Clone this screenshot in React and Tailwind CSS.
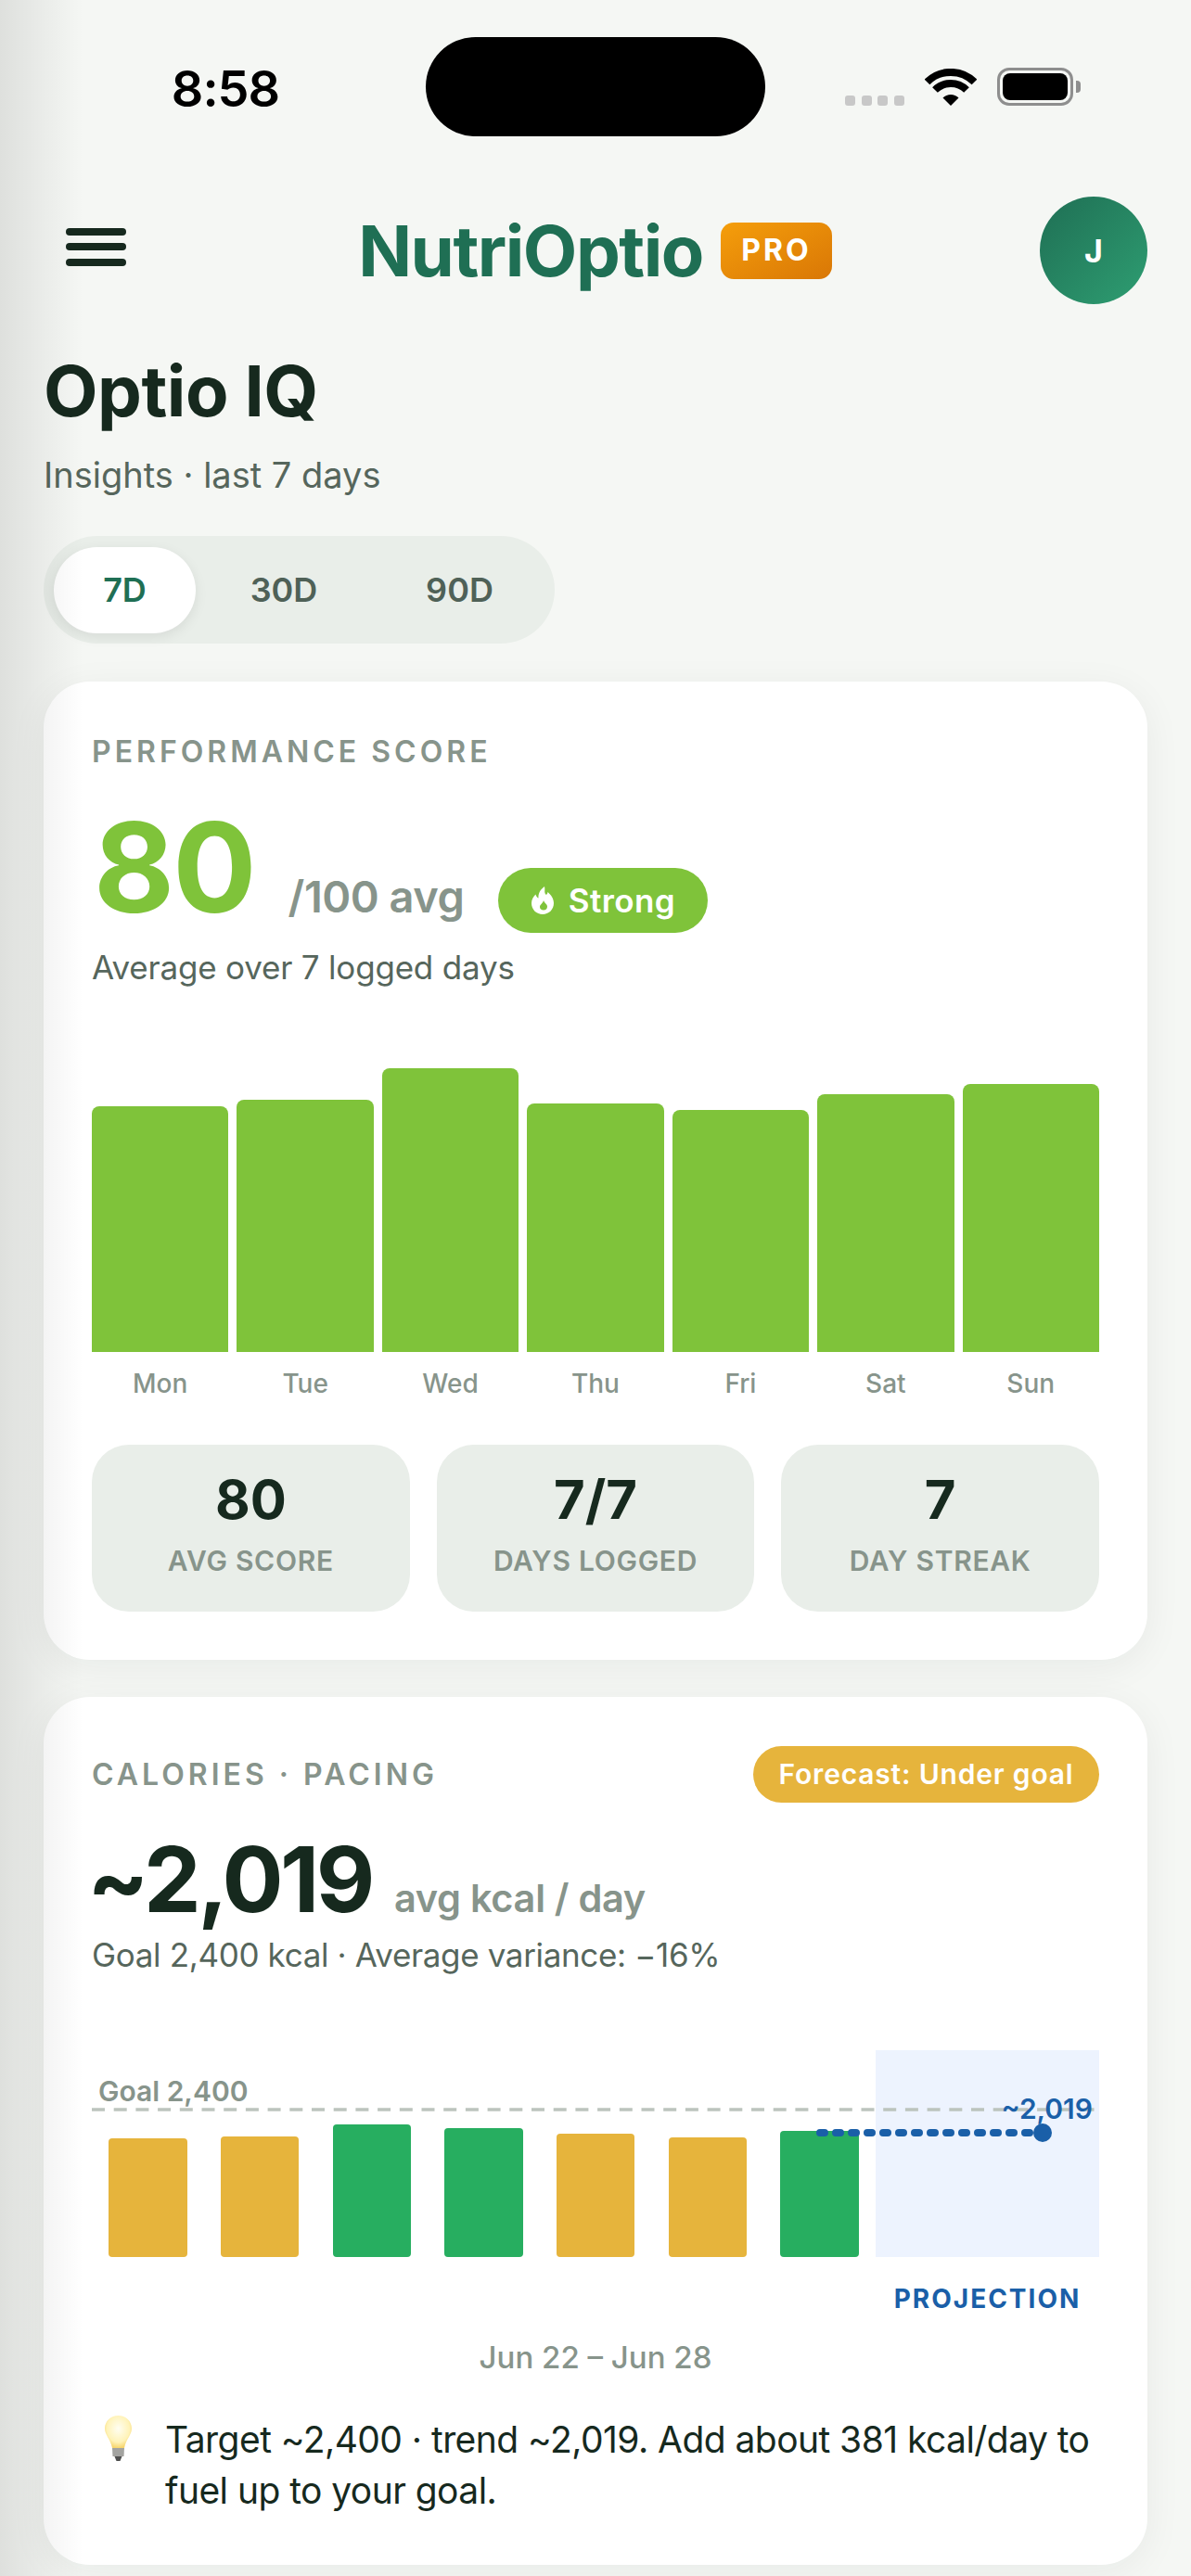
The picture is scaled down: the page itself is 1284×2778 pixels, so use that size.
import React from "react";

const scoreBars = [
  { day: "Mon", height: 265 },
  { day: "Tue", height: 272 },
  { day: "Wed", height: 306 },
  { day: "Thu", height: 268 },
  { day: "Fri", height: 261 },
  { day: "Sat", height: 278 },
  { day: "Sun", height: 289 },
];

const stats = [
  { value: "80", label: "AVG SCORE" },
  { value: "7/7", label: "DAYS LOGGED" },
  { value: "7", label: "DAY STREAK" },
];

const calorieBars = [
  { height: 128, color: "bg-[#e6b43c]" },
  { height: 130, color: "bg-[#e6b43c]" },
  { height: 143, color: "bg-[#27ae60]" },
  { height: 139, color: "bg-[#27ae60]" },
  { height: 133, color: "bg-[#e6b43c]" },
  { height: 129, color: "bg-[#e6b43c]" },
  { height: 136, color: "bg-[#27ae60]" },
];

const StatusBar = () => (
  <div className="flex h-[107px] mt-[40px]">
    <div className="w-[459px] pl-[27px] pt-[29px] text-center text-[54px] leading-[54px] font-semibold text-black tracking-[-1px]">
      8:58
    </div>
    <div className="w-[366px] h-[107px] rounded-[54px] bg-black" />
    <div className="flex items-end pl-[86px] pt-[33px] h-[74px]">
      <div className="flex gap-[6.5px]">
        {[0, 1, 2, 3].map((i) => (
          <span key={i} className="w-[11px] h-[11px] rounded-[3px] bg-[#c8c8c8]" />
        ))}
      </div>
      <svg className="ml-[22px] w-[56px] h-[40px]" viewBox="0 0 56 40">
        <path d="M2.5 14.5A36 36 0 0 1 53.5 14.5" fill="none" stroke="#000" strokeWidth="8" />
        <path d="M11 23A24 24 0 0 1 45 23" fill="none" stroke="#000" strokeWidth="8" />
        <path d="M28 40L19.5 31.5A12 12 0 0 1 36.5 31.5Z" fill="#000" />
      </svg>
      <div className="ml-[22px] flex items-center">
        <div className="w-[82px] h-[41px] rounded-[13px] border-[3px] border-[#8e8e8e] p-[3px]">
          <div className="w-full h-full rounded-[8px] bg-black" />
        </div>
        <div className="ml-[3px] w-[5px] h-[13px] rounded-r-[4px] bg-[#8e8e8e]" />
      </div>
    </div>
  </div>
);

const Header = () => (
  <div className="grid grid-cols-[116px_1fr_116px] items-center mt-[65px] px-[47px]">
    <div className="ml-[24px] mb-[8px] w-[65px] flex flex-col gap-[8.5px]">
      <span className="h-[8px] rounded-full bg-[#16291e]" />
      <span className="h-[8px] rounded-full bg-[#16291e]" />
      <span className="h-[8px] rounded-full bg-[#16291e]" />
    </div>
    <div className="flex items-center justify-center gap-[19px] pr-[1px]">
      <span className="text-[76px] leading-[84px] font-bold text-[#1f6f54] tracking-[-1.5px]">NutriOptio</span>
      <span className="w-[120px] h-[61px] rounded-[14px] bg-gradient-to-br from-[#f59e0b] to-[#d97706] flex items-center justify-center text-[32px] font-bold text-white tracking-[3px]">
        PRO
      </span>
    </div>
    <div className="w-[116px] h-[116px] rounded-full bg-gradient-to-br from-[#1f6f54] to-[#2e9e72] flex items-center justify-center text-[34px] font-bold text-white">
      J
    </div>
  </div>
);

const RangeTabs = () => (
  <div className="mt-[41px] w-[551px] h-[116px] rounded-[58px] bg-[#e9eee9] flex items-center pl-[11px] text-[36px] font-semibold text-[#4f6157]">
    <div className="w-[153px] h-[93px] rounded-[47px] bg-white shadow-[0_4px_14px_rgba(0,0,0,0.08)] flex items-center justify-center text-[#1f6f54]">
      7D
    </div>
    <div className="w-[190px] text-center">30D</div>
    <div className="w-[189px] text-center">90D</div>
  </div>
);

const PerformanceCard = () => (
  <div className="mt-[41px] h-[1055px] rounded-[50px] bg-white shadow-[0_8px_40px_rgba(20,40,30,0.06)] px-[52px] pt-[56px]">
    <div className="text-[32px] leading-[40px] font-semibold tracking-[4px] text-[#87948b]">PERFORMANCE SCORE</div>
    <div className="flex items-baseline mt-[34px] h-[140px]">
      <span className="text-[134px] leading-[140px] font-bold text-[#7fc33a] tracking-[-2px] ml-[2px]">80</span>
      <span className="ml-[36px] text-[47px] font-semibold text-[#87948b] tracking-[-0.5px]">/100 avg</span>
      <span className="ml-[37px] translate-y-[2px] w-[226px] h-[70px] rounded-[35px] bg-[#7fc33a] flex items-center justify-center gap-[16px] text-[35px] font-semibold text-white tracking-[0.4px]">
        <svg className="w-[24px] h-[30px]" viewBox="0 0 24 30">
          <path
            fillRule="evenodd"
            fill="#fff"
            d="M14 0C15 4 13 7 16 9C17 8 17.500 7 17.500 6C21 9 24 13 24 18C24 25 18.500 30 12 30C5.500 30 0 25 0 18C0 14 2 11 4.500 8.500C5 10.500 6 12 7.500 12.500C7 7 10 3 14 0ZM13 15C12.500 18 9 19.500 9 22C9 24 10.500 25.500 13 25.500C15.500 25.500 17 24 17 21.500C17 19 14 18 13 15Z"
          />
        </svg>
        Strong
      </span>
    </div>
    <div className="mt-[14px] text-[35px] leading-[48px] text-[#56665c] tracking-[-0.2px]">Average over 7 logged days</div>
    <div className="mt-[85px] h-[306px] flex items-end gap-[9px]">
      {scoreBars.map((bar) => (
        <div key={bar.day} className="flex-1 rounded-t-[8px] bg-[#7fc33a]" style={{ height: bar.height }} />
      ))}
    </div>
    <div className="flex gap-[9px] mt-[16px]">
      {scoreBars.map((bar) => (
        <div key={bar.day} className="flex-1 text-center text-[28px] leading-[36px] font-medium text-[#87948b]">
          {bar.day}
        </div>
      ))}
    </div>
    <div className="grid grid-cols-3 gap-[29px] mt-[48px]">
      {stats.map((stat) => (
        <div key={stat.label} className="h-[180px] rounded-[40px] bg-[#e9eee9] flex flex-col items-center pt-[27px]">
          <div className="text-[58px] leading-[64px] font-bold text-[#16291e]">{stat.value}</div>
          <div className="mt-[14px] text-[30px] leading-[40px] font-semibold text-[#87948b] tracking-[0.7px]">{stat.label}</div>
        </div>
      ))}
    </div>
  </div>
);

const CaloriesCard = () => (
  <div className="mt-[40px] h-[936px] rounded-[50px] bg-white shadow-[0_8px_40px_rgba(20,40,30,0.06)] px-[52px] pt-[53px]">
    <div className="flex items-center justify-between">
      <div className="text-[32px] leading-[40px] font-semibold tracking-[4px] text-[#87948b]">CALORIES · PACING</div>
      <div className="w-[373px] h-[61px] rounded-[31px] bg-[#e6b43c] flex items-center justify-center text-[30px] font-semibold text-white tracking-[0.8px]">
        Forecast: Under goal
      </div>
    </div>
    <div className="flex items-baseline mt-[25px] -ml-[5px]">
      <span className="text-[98px] leading-[116px] font-bold text-[#16291e] tracking-[-3.5px]">~2,019</span>
      <span className="ml-[24px] text-[41.5px] font-semibold text-[#87948b] tracking-[-0.3px]">avg kcal / day</span>
    </div>
    <div className="-mt-[1px] text-[35px] leading-[48px] text-[#56665c] tracking-[-0.35px]">Goal 2,400 kcal · Average variance: −16%</div>
    <div className="relative mt-[79px] h-[223px] flex">
      <div className="w-[845px] flex items-end">
        {calorieBars.map((bar, i) => (
          <div key={i} className="flex-1 flex justify-center">
            <div className={`w-[84.5px] rounded-[4px] ${bar.color}`} style={{ height: bar.height }} />
          </div>
        ))}
      </div>
      <div className="w-[241px] bg-[#edf3fe]" />
      <svg className="absolute left-0 top-[62px] w-[1086px] h-[4px]" viewBox="0 0 1086 4">
        <line x1="0" y1="2" x2="1086" y2="2" stroke="#bcc4bd" strokeWidth="3.5" strokeDasharray="14 9.700" />
      </svg>
      <div className="absolute left-[7px] top-[24px] text-[30px] leading-[40px] font-semibold text-[#87948b]">Goal 2,400</div>
      <div className="absolute right-[7px] top-[45px] text-[30px] leading-[36px] font-semibold text-[#1a5fa8]">~2,019</div>
      <svg className="absolute left-[781px] top-[77px] w-[260px] h-[24px]" viewBox="0 0 260 24">
        <line x1="4" y1="12" x2="235" y2="12" stroke="#1a5fa8" strokeWidth="8" strokeLinecap="round" strokeDasharray="5 12" />
        <circle cx="244" cy="12" r="10" fill="#1a5fa8" />
      </svg>
    </div>
    <div className="flex justify-end mt-[27px]">
      <div className="w-[241px] text-center text-[28px] leading-[36px] font-bold tracking-[2px] text-[#1a5fa8]">PROJECTION</div>
    </div>
    <div className="mt-[23px] text-center text-[33px] leading-[44px] font-medium text-[#87948b]">Jun 22 – Jun 28</div>
    <div className="flex mt-[39px] pl-[14px] gap-[36px]">
      <svg className="w-[29px] h-[50px] shrink-0 mt-[2px]" viewBox="0 0 29 50">
        <defs>
          <radialGradient id="bulbGlow" cx="50%" cy="40%" r="60%">
            <stop offset="0%" stopColor="#fffef2" />
            <stop offset="70%" stopColor="#fff3b8" />
            <stop offset="100%" stopColor="#f7d56c" />
          </radialGradient>
        </defs>
        <path d="M14.500 0C22.500 0 29 6 29 14C29 21 23 25 21 35H8C6 25 0 21 0 14C0 6 6.500 0 14.500 0Z" fill="url(#bulbGlow)" />
        <path d="M8 35H21L20.500 44H8.500Z" fill="#a3a3a0" />
        <path d="M10.500 44H18.500L16.500 49H12.500Z" fill="#4f4f4f" />
      </svg>
      <div className="text-[39px] leading-[55px] text-[#16291e] tracking-[-0.55px]">
        Target ~2,400 · trend ~2,019. Add about 381 kcal/day to fuel up to your goal.
      </div>
    </div>
  </div>
);

const App = () => (
  <div className="relative w-[1284px] h-[2778px] overflow-hidden bg-[#f5f7f4] font-['Inter',sans-serif] flex flex-col">
    <StatusBar />
    <Header />
    <div className="px-[47px]">
      <h1 className="mt-[51px] text-[76px] leading-[84px] font-bold text-[#16291e] tracking-[-0.5px]">Optio IQ</h1>
      <p className="mt-[24px] text-[38px] leading-[50px] text-[#56665c]">Insights · last 7 days</p>
      <RangeTabs />
      <PerformanceCard />
      <CaloriesCard />
    </div>
    {/* dim edge on the left of the page */}
    <div className="absolute inset-y-0 left-0 w-[90px] bg-gradient-to-r from-[#00000018] to-transparent pointer-events-none" />
  </div>
);

export default App;
